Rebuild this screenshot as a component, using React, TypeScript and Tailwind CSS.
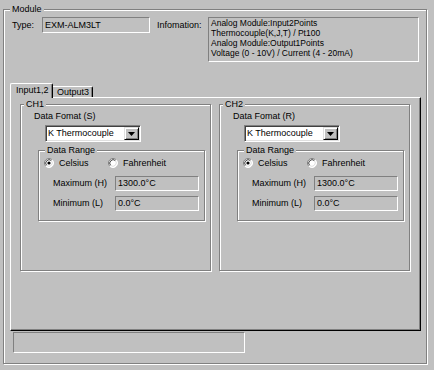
import React from "react";

const etched =
  "border border-[#808080] shadow-[inset_1px_1px_0_#ffffff,1px_1px_0_#ffffff]";
const sunken =
  "border border-t-[#808080] border-l-[#808080] border-r-white border-b-white";

function Radio({ checked }: { checked: boolean }) {
  return (
    <svg width="10" height="10" viewBox="0 0 10 10" className="shrink-0">
      <circle cx="5" cy="5" r="4.5" fill="#ffffff" />
      <path d="M1.8 8.2 A4.5 4.5 0 0 1 8.2 1.8" fill="none" stroke="#808080" strokeWidth="1" />
      <path d="M8.2 1.8 A4.5 4.5 0 0 1 1.8 8.2" fill="none" stroke="#ffffff" strokeWidth="1" />
      <path d="M2.6 7.4 A3.4 3.4 0 0 1 7.4 2.6" fill="none" stroke="#404040" strokeWidth="1" />
      <path d="M7.4 2.6 A3.4 3.4 0 0 1 2.6 7.4" fill="none" stroke="#dfdfdf" strokeWidth="1" />
      {checked && <circle cx="5" cy="5" r="1.6" fill="#000000" />}
    </svg>
  );
}

function Channel({ name, fmt }: { name: string; fmt: string }) {
  return (
    <fieldset className={`${etched} w-[191px] h-[173px] m-0 p-0`}>
      <legend className="ml-[3px] px-[2px] leading-[13px] bg-[#c0c0c0]">{name}</legend>
      <div className="ml-[13px] leading-[11px]">Data Fomat ({fmt})</div>
      <div className="ml-[24px] mt-[3px] w-[96px] h-[17px] bg-white border border-t-[#808080] border-l-[#808080] border-r-white border-b-white shadow-[inset_1px_1px_0_#404040,inset_-1px_-1px_0_#dfdfdf] flex items-center">
        <span className="pl-[2px] flex-1 leading-[11px]">K Thermocouple</span>
        <div className="w-[15px] h-[13px] mr-[1px] bg-[#c0c0c0] border border-t-[#dfdfdf] border-l-[#dfdfdf] border-r-black border-b-black shadow-[inset_1px_1px_0_#ffffff,inset_-1px_-1px_0_#808080] flex items-center justify-center">
          <svg width="7" height="4" viewBox="0 0 7 4">
            <path d="M0 0 H7 L3.5 4 Z" fill="#000" />
          </svg>
        </div>
      </div>
      <fieldset className={`${etched} ml-[17px] mt-[2px] w-[167px] h-[77px] m-0 p-0`}>
        <legend className="ml-[6px] px-[2px] leading-[13px] bg-[#c0c0c0]">Data Range</legend>
        <div className="flex items-center h-[12px] ml-[5px]">
          <div className="flex items-center gap-[5px] w-[64px]">
            <Radio checked />
            <span className="leading-[11px]">Celsius</span>
          </div>
          <div className="flex items-center gap-[5px]">
            <Radio checked={false} />
            <span className="leading-[11px]">Fahrenheit</span>
          </div>
        </div>
        <div className="flex items-center mt-[7px] ml-[14px]">
          <span className="w-[62px] leading-[11px]">Maximum (H)</span>
          <div className={`${sunken} w-[84px] h-[15px] pl-[2px] leading-[13px]`}>1300.0°C</div>
        </div>
        <div className="flex items-center mt-[5px] ml-[14px]">
          <span className="w-[62px] leading-[11px]">Minimum (L)</span>
          <div className={`${sunken} w-[84px] h-[15px] pl-[2px] leading-[13px]`}>0.0°C</div>
        </div>
      </fieldset>
    </fieldset>
  );
}

export default function App() {
  return (
    <div className="w-[434px] h-[370px] bg-[#c0c0c0] text-black text-[9px] leading-[11px] font-['Liberation_Sans',Arial,sans-serif] pt-[3px] pl-[3px]">
      <fieldset className={`${etched} w-[424px] h-[361px] m-0 p-0`}>
        <legend className="ml-[6px] px-[2px] leading-[13px] bg-[#c0c0c0]">Module</legend>
        <div className="flex items-start mt-[1px]">
          <span className="ml-[8px] w-[30px] pt-[3px]">Type:</span>
          <div className={`${sunken} w-[108px] h-[16px] pl-[2px] pt-[1px] leading-[12px]`}>EXM-ALM3LT</div>
          <span className="ml-[7px] w-[51px] pt-[3px]">Infomation:</span>
          <div className={`${sunken} w-[211px] h-[45px] pl-[2px] leading-[10px] text-[8.5px]`}>
            <div>Analog Module:Input2Points</div>
            <div>Thermocouple(K,J,T) / Pt100</div>
            <div>Analog Module:Output1Points</div>
            <div>Voltage (0 - 10V) / Current (4 - 20mA)</div>
          </div>
        </div>
        <div className="ml-[6px] mt-[21px] w-[411px]">
          <div className="flex items-end h-[14px] relative z-10">
            <div className="h-[15px] -mb-[1px] w-[43px] bg-[#c0c0c0] border-l border-t border-r border-l-white border-t-white border-r-black rounded-tl-[2px] rounded-tr-[2px] shadow-[inset_-1px_0_0_#808080] pl-[5px] pt-[1px] leading-[11px]">
              Input1,2
            </div>
            <div className="h-[11px] w-[40px] border-t border-r border-t-white border-r-black rounded-tr-[2px] shadow-[inset_-1px_0_0_#808080] pl-[4px] leading-[10px]">
              Output3
            </div>
          </div>
          <div className="w-[411px] h-[234px] border border-t-white border-l-white border-r-black border-b-black shadow-[inset_-1px_-1px_0_#808080] pl-[9px] flex gap-[8px]">
            <Channel name="CH1" fmt="S" />
            <Channel name="CH2" fmt="R" />
          </div>
        </div>
        <div className={`${sunken} ml-[9px] mt-[1px] w-[232px] h-[21px]`} />
      </fieldset>
    </div>
  );
}
